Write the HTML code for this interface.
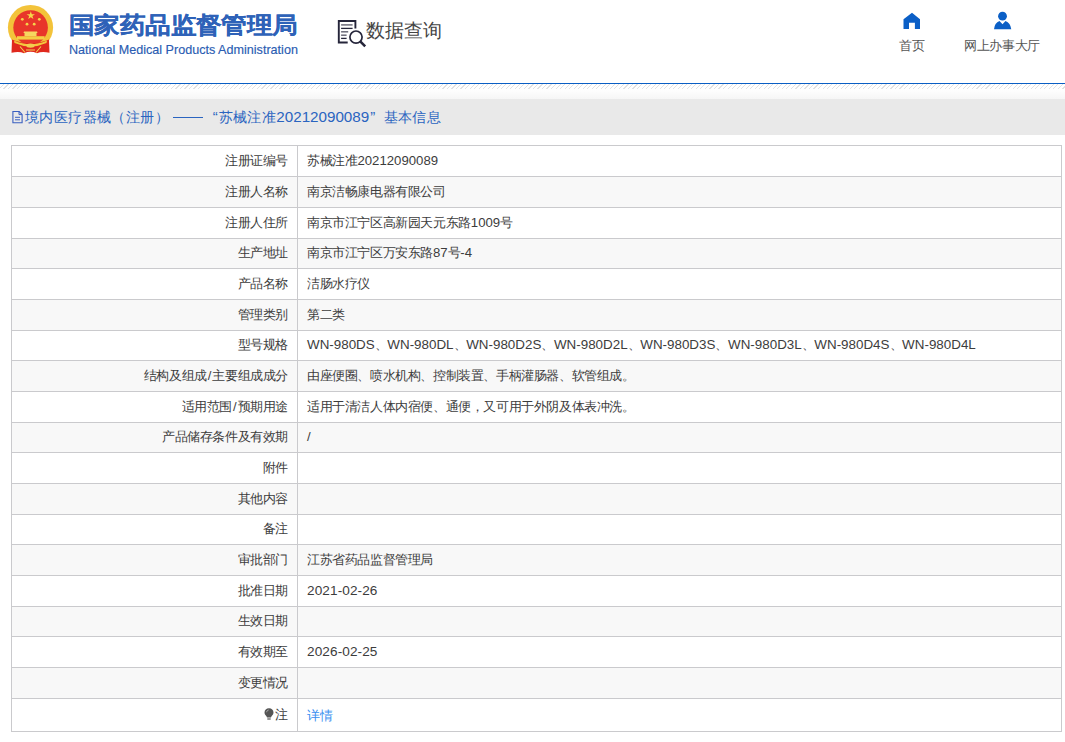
<!DOCTYPE html>
<html><head><meta charset="utf-8">
<style>
*{margin:0;padding:0;box-sizing:border-box}
html,body{width:1065px;height:742px;overflow:hidden;background:#fff;font-family:"Liberation Sans",sans-serif;}
.hd{position:absolute;left:0;top:0;width:1065px;height:83px;background:#fff}
.emb{position:absolute;left:0;top:0;width:60px;height:60px}
.t1{position:absolute;left:69px;top:10.5px;font-size:26px;font-weight:bold;color:#2e62b8;white-space:nowrap;letter-spacing:-0.6px;line-height:30px;-webkit-text-stroke:0.25px #2e62b8;transform:scaleY(0.9);transform-origin:0 0}
.t2{position:absolute;left:69px;top:41.5px;font-size:12.6px;color:#2a5cb2;-webkit-text-stroke:0.15px #2a5cb2;white-space:nowrap;line-height:16px}
.dq{position:absolute;left:0;top:0;width:470px;height:60px}
.dqt{position:absolute;left:366px;top:16px;font-size:19px;color:#444;white-space:nowrap;line-height:30px}
.nav{position:absolute;top:38px;font-size:13px;color:#555;white-space:nowrap;line-height:16px;letter-spacing:-0.35px}
.ico{position:absolute}
.bl{position:absolute;left:0;top:83px;width:1065px;height:1px;background:#0a5ec4}
.hatch{position:absolute;left:0;top:84px;width:1065px;height:5px;
 background:repeating-linear-gradient(135deg,#fff 0px,#fff 2.4px,#e2e2e2 2.4px,#e2e2e2 3.2px)}
.grad{position:absolute;left:0;top:89px;width:1065px;height:10px;background:linear-gradient(#fff,#f6f6f6)}
.bar{position:absolute;left:0;top:99px;width:1065px;height:36px;background:#e9e9e9}
.bart{position:absolute;left:25px;top:107px;font-size:14px;color:#2a64c0;white-space:nowrap;line-height:20px;letter-spacing:0.4px}
.bart .d{font-size:15.2px;letter-spacing:0}
.doc{position:absolute;left:11px;top:110px;width:13px;height:14px}
.tb{position:absolute;left:0;top:0;width:1065px;height:742px;font-size:13px;color:#3c3c3c}
.r{position:absolute;left:11px;width:1051px;border-top:1px solid #cacacd;border-left:1px solid #cacacd;border-right:1px solid #cacacd}
.k{position:absolute;right:773px;top:-1px;white-space:nowrap;letter-spacing:-0.4px;text-align:right}
.v{position:absolute;left:295px;top:-1px;white-space:nowrap;letter-spacing:-0.4px}
.l{font-size:13.4px;letter-spacing:0}
.d{letter-spacing:0}
.k .d{margin:0 1px}
.v .d{font-size:13.2px}
.v .dt{font-size:13.6px;letter-spacing:0.1px}
.tbb{position:absolute;left:11px;top:731px;width:1051px;height:1px;background:#cacacd}
.sep{position:absolute;left:297px;top:145px;width:1px;height:586px;background:#cacacd}
.bulb{vertical-align:-1px;margin-right:1px}
a{color:#3a8ff0;text-decoration:none;position:relative;top:1px}

.dash{display:inline-block;width:30.5px;height:1px;background:#2a64c0;margin:0 1px 0 3.8px;vertical-align:4.5px}
.lq,.rq{display:inline-block;width:14.4px;letter-spacing:0;font-size:15px}
.lq{text-align:right;padding-right:1px}
.rq{text-align:left;padding-left:1px}
</style></head><body>
<div class="hd">
  <svg class="emb" viewBox="0 0 60 60">
    <circle cx="30.5" cy="27.5" r="22.6" fill="#f3c33a"/>
    <circle cx="30.6" cy="27.5" r="17.3" fill="#e8362a"/>
    <polygon points="30.8,11.2 31.8,14.2 35,14.2 32.4,16.1 33.4,19.1 30.8,17.3 28.2,19.1 29.2,16.1 26.6,14.2 29.8,14.2" fill="#f6d84a"/>
    <circle cx="22.3" cy="19.3" r="1.4" fill="#f4d44a"/>
    <circle cx="39.3" cy="19.3" r="1.4" fill="#f4d44a"/>
    <circle cx="27" cy="24.2" r="1.4" fill="#f4d44a"/>
    <circle cx="34.2" cy="24.2" r="1.4" fill="#f4d44a"/>
    <path d="M24 31.5 H37 L37.5 33 H23.5 Z M24.5 33 H36.5 V36.2 H24.5Z" fill="#f6d860"/>
    <path d="M17 36.2 H44.6 V39.6 H17Z" fill="#f4cf45"/>
    <path d="M12 39.5 Q30.5 47 49 39.5 L49.5 52.8 Q42 51 37 53.2 Q30.5 50.5 24 53.2 Q19 51 11.5 52.8 Z" fill="#e0291e"/>
    <path d="M14 40.5 Q30.5 48 47 40.5 L46.5 43 Q30.5 50 14.5 43Z" fill="#f3c83e"/>
    <ellipse cx="30.5" cy="45.6" rx="4.2" ry="2.2" fill="#f2cc50"/>
    <path d="M20 46.5 L25 52.5 M41 46.5 L36 52.5 M26 50 H35" stroke="#f3d050" stroke-width="1.1" fill="none"/>
  </svg>
  <div class="t1">国家药品监督管理局</div>
  <div class="t2">National Medical Products Administration</div>
  <svg class="dq" viewBox="0 0 470 60">
    <path d="M338.8 43.5 V21 H355.4 V28.4 M338.8 42.45 H347.7" fill="none" stroke="#25253a" stroke-width="1.9"/>
    <path d="M341.1 24.9 H352.6" stroke="#6a6a78" stroke-width="1.5"/>
    <path d="M341.1 28.4 H352.6" stroke="#25253a" stroke-width="1.3"/>
    <path d="M341.1 31.8 H348.2" stroke="#6a6a78" stroke-width="1.5"/>
    <path d="M341.1 35.2 H346.6" stroke="#6a6a78" stroke-width="1.5"/>
    <path d="M341.1 38.4 H346.6" stroke="#25253a" stroke-width="1.3"/>
    <circle cx="356" cy="37.1" r="6.1" fill="none" stroke="#25253a" stroke-width="1.7"/>
    <path d="M360.5 41.6 L365.2 46.3" stroke="#25253a" stroke-width="2.6"/>
  </svg>
  <div class="dqt">数据查询</div>
  <svg class="ico" style="left:903px;top:12px" width="18" height="17" viewBox="0 0 18 17">
    <path d="M9 0.7 L17 7.2 V17 H11.9 V10.8 H6 V17 H0.5 V7.2 Z" fill="#0b5fc6"/>
  </svg>
  <div class="nav" style="left:899px">首页</div>
  <svg class="ico" style="left:993px;top:11px" width="20" height="19" viewBox="0 0 20 19">
    <circle cx="9.5" cy="5.2" r="4.4" fill="#0b5fc6"/>
    <path d="M1 18.3 Q1.5 12 6.5 10 L9.5 13.2 L12.5 10 Q17.5 12 18.3 18.3 Z" fill="#0b5fc6"/>
  </svg>
  <div class="nav" style="left:964px">网上办事大厅</div>
</div>
<div class="bl"></div>
<div class="hatch"></div>
<div class="grad"></div>
<div class="bar"></div>
<svg class="doc" viewBox="0 0 13 14"><path d="M1.9 1.5H8.2L11.1 4.4V12.7H1.9Z" fill="none" stroke="#3a5fc0" stroke-width="1.1"/><path d="M8 1.5V4.6H11" fill="none" stroke="#3a5fc0" stroke-width="1"/><path d="M4 7.3H9M4 9.8H9" stroke="#3a5fc0" stroke-width="1"/></svg>
<div class="bart">境内医疗器械（注册）<span class="dash"></span><span class="lq">“</span>苏械注准<span class="d">20212090089</span><span class="rq">”</span>基本信息</div>
<div class="tb">
<div class="r" style="top:145px;height:31px;background:#fff"><div class="k" style="line-height:31px">注册证编号</div><div class="v" style="line-height:31px">苏械注准<span class="d">20212090089</span></div></div>
<div class="r" style="top:176px;height:31px;background:#f8f8f8"><div class="k" style="line-height:31px">注册人名称</div><div class="v" style="line-height:31px">南京洁畅康电器有限公司</div></div>
<div class="r" style="top:207px;height:31px;background:#fff"><div class="k" style="line-height:31px">注册人住所</div><div class="v" style="line-height:31px">南京市江宁区高新园天元东路<span class="d">1009</span>号</div></div>
<div class="r" style="top:238px;height:30px;background:#f8f8f8"><div class="k" style="line-height:30px">生产地址</div><div class="v" style="line-height:30px">南京市江宁区万安东路<span class="d">87</span>号<span class="d">-4</span></div></div>
<div class="r" style="top:268px;height:31px;background:#fff"><div class="k" style="line-height:31px">产品名称</div><div class="v" style="line-height:31px">洁肠水疗仪</div></div>
<div class="r" style="top:299px;height:31px;background:#f8f8f8"><div class="k" style="line-height:31px">管理类别</div><div class="v" style="line-height:31px">第二类</div></div>
<div class="r" style="top:330px;height:30px;background:#fff"><div class="k" style="line-height:30px">型号规格</div><div class="v" style="line-height:30px"><span class="l">WN-980DS</span>、<span class="l">WN-980DL</span>、<span class="l">WN-980D2S</span>、<span class="l">WN-980D2L</span>、<span class="l">WN-980D3S</span>、<span class="l">WN-980D3L</span>、<span class="l">WN-980D4S</span>、<span class="l">WN-980D4L</span></div></div>
<div class="r" style="top:360px;height:31px;background:#f8f8f8"><div class="k" style="line-height:31px">结构及组成<span class="d">/</span>主要组成成分</div><div class="v" style="line-height:31px">由座便圈、喷水机构、控制装置、手柄灌肠器、软管组成。</div></div>
<div class="r" style="top:391px;height:31px;background:#fff"><div class="k" style="line-height:31px">适用范围<span class="d">/</span>预期用途</div><div class="v" style="line-height:31px">适用于清洁人体内宿便、通便，又可用于外阴及体表冲洗。</div></div>
<div class="r" style="top:422px;height:30px;background:#f8f8f8"><div class="k" style="line-height:30px">产品储存条件及有效期</div><div class="v" style="line-height:30px"><span class="d">/</span></div></div>
<div class="r" style="top:452px;height:31px;background:#fff"><div class="k" style="line-height:31px">附件</div><div class="v" style="line-height:31px"></div></div>
<div class="r" style="top:483px;height:31px;background:#f8f8f8"><div class="k" style="line-height:31px">其他内容</div><div class="v" style="line-height:31px"></div></div>
<div class="r" style="top:514px;height:30px;background:#fff"><div class="k" style="line-height:30px">备注</div><div class="v" style="line-height:30px"></div></div>
<div class="r" style="top:544px;height:31px;background:#f8f8f8"><div class="k" style="line-height:31px">审批部门</div><div class="v" style="line-height:31px">江苏省药品监督管理局</div></div>
<div class="r" style="top:575px;height:31px;background:#fff"><div class="k" style="line-height:31px">批准日期</div><div class="v" style="line-height:31px"><span class="d dt">2021-02-26</span></div></div>
<div class="r" style="top:606px;height:30px;background:#f8f8f8"><div class="k" style="line-height:30px">生效日期</div><div class="v" style="line-height:30px"></div></div>
<div class="r" style="top:636px;height:31px;background:#fff"><div class="k" style="line-height:31px">有效期至</div><div class="v" style="line-height:31px"><span class="d dt">2026-02-25</span></div></div>
<div class="r" style="top:667px;height:31px;background:#f8f8f8"><div class="k" style="line-height:31px">变更情况</div><div class="v" style="line-height:31px"></div></div>
<div class="r" style="top:698px;height:33px;background:#fff"><div class="k" style="line-height:33px"><svg class="bulb" width="10" height="12" viewBox="0 0 10 12"><path d="M5 0.3C2.4 0.3 0.5 2.2 0.5 4.6C0.5 6.3 1.6 7.4 2.6 8.4L3 9.6H7L7.4 8.4C8.4 7.4 9.5 6.3 9.5 4.6C9.5 2.2 7.6 0.3 5 0.3Z" fill="#555"/><rect x="3.3" y="10.4" width="3.4" height="1.2" fill="#555"/><path d="M2.6 4.2C2.8 3 3.6 2.2 4.6 2" stroke="#bbb" stroke-width="0.9" fill="none"/></svg>注</div><div class="v" style="line-height:33px"><a>详情</a></div></div>
<div class="tbb"></div><div class="sep"></div></div>
</body></html>
